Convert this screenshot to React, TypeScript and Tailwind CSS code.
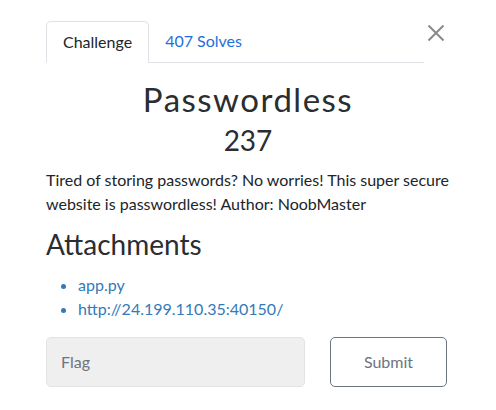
export default function App() {
  return (
    <div className="relative h-[410px] w-[496px] bg-white font-['Lato','Liberation_Sans',sans-serif] text-[#212529]">
      <button className="absolute left-[427px] top-[24px] text-[#8a8a8a]" aria-label="Close">
        <svg width="18" height="18" viewBox="0 0 18 18" fill="none" stroke="currentColor" strokeWidth="2">
          <path d="M1.5 1.5L16.5 16.5M16.5 1.5L1.5 16.5" />
        </svg>
      </button>
      <div className="px-[46px] pt-[21px]">
        <div className="mr-[26px] flex border-b border-[#dee2e6]">
          <div className="-mb-px rounded-t-[5px] border border-b-white border-[#dee2e6] bg-white px-4 pb-[10px] pt-[10px] text-[16px] leading-5">
            Challenge
          </div>
          <div className="px-4 pb-[10px] pt-[10px] text-[16px] leading-5 text-[#1e6fdc]">407 Solves</div>
        </div>

        <h2 className="mt-[14px] text-center text-[33px] leading-[44px] tracking-[1.5px] text-[#2a2d31]">Passwordless</h2>
        <h3 className="mt-[2px] text-center text-[28px] leading-[34px] text-[#2a2d31]">237</h3>

        <p className="mt-[11px] text-[16px] leading-[24px]">
          Tired of storing passwords? No worries! This super secure website is passwordless! Author: NoobMaster
        </p>

        <h3 className="mt-[9px] text-[28px] leading-[38px] text-[#2a2d31]">Attachments</h3>
        <ul className="mt-[10px] list-disc pl-[32px] text-[16px] leading-[24px] text-[#337ab7]">
          <li>app.py</li>
          <li>http://24.199.110.35:40150/</li>
        </ul>

        <div className="mt-[16px] flex gap-[25px]">
          <div className="flex h-[50px] w-[259px] items-center rounded-[5px] border border-[#e3e3e3] bg-[#efefef] px-[14px] text-[16px] text-[#6c757d]">
            Flag
          </div>
          <button className="h-[50px] w-[117px] rounded-[5px] border border-[#6c757d] text-[16px] text-[#6c757d]">
            Submit
          </button>
        </div>
      </div>
    </div>
  );
}
